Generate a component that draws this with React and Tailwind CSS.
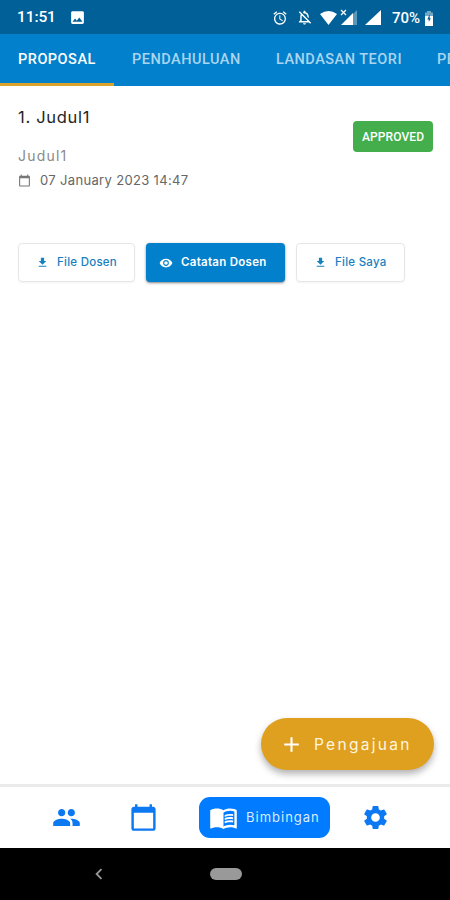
import React from 'react'
import {
  MdAdd,
  MdAlarm,
  MdCalendarToday,
  MdChevronLeft,
  MdFileDownload,
  MdImage,
  MdMenuBook,
  MdOutlineNotificationsOff,
  MdPeople,
  MdSettings,
  MdVisibility,
} from 'react-icons/md'

function StatusBar() {
  return (
    <div className="flex h-[34px] items-center bg-[#006097] pl-[17px] pr-[17px] pt-[2px] font-['Roboto',sans-serif] text-[15.5px] font-medium text-white">
      <span className="w-[52px] tracking-[-0.1px]">11:51</span>
      <MdImage className="-mt-px h-[17px] w-[17px]" />
      <MdAlarm className="-mt-px ml-auto h-[16px] w-[16px]" />
      <MdOutlineNotificationsOff className="-mt-px ml-[8px] h-[17px] w-[17px]" />
      {/* Wifi + signal */}
      <svg className="-mt-px ml-[7px]" width="17" height="14" viewBox="0 0 17 14" fill="currentColor">
        <path d="M0 3Q8.500-3 17 3L8.500 14Z" />
      </svg>
      <svg className="-mt-[2px] ml-[3px]" width="17" height="17" viewBox="0 0 17 17" fill="currentColor">
        <path d="M17 1v15H13V5Z" opacity=".35" />
        <path d="M13 4v12H1Z" />
        <path d="M1 1l5 5M6 1L1 6" stroke="currentColor" strokeWidth="1.200" />
      </svg>
      <svg className="-mt-[2px] ml-[8px]" width="17" height="15" viewBox="0 0 17 15" fill="currentColor">
        <path d="M16 0v15H0Z" />
      </svg>
      <span className="ml-[10px] w-[30px] text-[15px]">70%</span>
      <svg className="ml-[3px]" width="8" height="15" viewBox="0 0 8 15" fill="currentColor">
        <path d="M2 0h4v1.500H8V5H0V1.500H2Z" opacity=".45" />
        <path d="M0 5h8v10H0Z" />
        <path d="M4.700 3L2.300 8.500H3.800V11L5.800 7.300H4.700Z" fill="#006097" />
      </svg>
    </div>
  )
}

function Tabs() {
  return (
    <div className="flex h-[52px] overflow-hidden whitespace-nowrap bg-[#0280cc] font-['Roboto',sans-serif] text-[14.5px] font-medium text-[#a9d5f0]">
      <div className="flex w-[114px] shrink-0 items-center border-b-[3px] border-[#d9a32c] pl-[18px] pt-[3px] tracking-[0.5px] text-white">PROPOSAL</div>
      <div className="flex w-[144px] shrink-0 items-center pl-[18px] tracking-[0.5px]">PENDAHULUAN</div>
      <div className="flex w-[161px] shrink-0 items-center pl-[18px] tracking-[0.5px]">LANDASAN TEORI</div>
      <div className="flex shrink-0 items-center pl-[18px] tracking-[0.5px]">PE</div>
    </div>
  )
}

function Proposal() {
  return (
    <div className="flex h-[157px] items-start justify-between pl-[18px] pr-[17px]">
      <div>
        <h1 className="mt-[19px] text-[16.5px] leading-[24px] tracking-[0.7px] text-[#252525]">1. Judul1</h1>
        <p className="mt-[16px] text-[14px] leading-[22px] tracking-[1.2px] text-[#8a8a8a]">Judul1</p>
        <div className="mt-[3px] flex items-center text-[13px] leading-[20px] text-[#666]">
          <MdCalendarToday className="mr-[9px] h-[13px] w-[13px] text-[#777]" />
          <span className="tracking-[0.34px]">07 January 2023 14:47</span>
        </div>
      </div>
      <span className="mt-[35px] flex h-[31px] w-[80px] items-center justify-center rounded-[4px] bg-[#43ae4b] font-['Roboto',sans-serif] text-[12px] font-medium tracking-[0.1px] text-white">
        APPROVED
      </span>
    </div>
  )
}

function Actions() {
  return (
    <div className="flex gap-[11px] pl-[18px] text-[11.5px] font-medium text-[#1681c0]">
      <button className="flex h-[39px] w-[117px] items-center rounded-[4px] border border-[#e6e6e6] pl-[17px] shadow-xs">
        <MdFileDownload className="mr-[8px] h-[13px] w-[13px]" />
        <span className="tracking-[0.25px]">File Dosen</span>
      </button>
      <button className="flex h-[39px] w-[139px] items-center rounded-[4px] bg-[#0280cc] pl-[13px] text-white shadow-sm shadow-black/40">
        <MdVisibility className="mr-[8px] h-[14px] w-[14px]" />
        <span className="font-semibold tracking-[0.28px]">Catatan Dosen</span>
      </button>
      <button className="flex h-[39px] w-[109px] items-center rounded-[4px] border border-[#e6e6e6] pl-[17px] shadow-xs">
        <MdFileDownload className="mr-[8px] h-[13px] w-[13px]" />
        <span className="tracking-[0.25px]">File Saya</span>
      </button>
    </div>
  )
}

function BottomNav() {
  return (
    <div className="flex h-[64px] items-center border-t-[3px] border-[#ebebeb] bg-white pl-[52px] text-[#0c78f2]">
      <MdPeople className="h-[29px] w-[29px]" />
      <MdCalendarToday className="ml-[48px] h-[29px] w-[29px]" />
      <div className="ml-[41px] flex h-[41px] w-[131px] items-center rounded-[11px] bg-[#017bff] pl-[10px] text-white">
        <MdMenuBook className="h-[29px] w-[29px]" />
        <span className="ml-[8px] text-[13px] tracking-[1px] text-[#d9ebff]">Bimbingan</span>
      </div>
      <MdSettings className="ml-[31px] h-[29px] w-[29px]" />
    </div>
  )
}

function App() {
  return (
    <div className="flex h-[900px] w-[450px] flex-col overflow-hidden bg-white font-['Inter',sans-serif]">
      <StatusBar />
      <Tabs />
      <div className="flex flex-1 flex-col">
        <Proposal />
        <Actions />
        {/* New submission */}
        <button className="mb-[14px] mr-[16px] mt-auto flex h-[52px] w-[173px] items-center self-end rounded-full bg-[#df9f1f] pl-[18px] text-white shadow-[0_4px_7px_rgba(0,0,0,0.3)]">
          <MdAdd className="h-[25px] w-[25px]" />
          <span className="ml-[10px] pt-px text-[15.5px] tracking-[2.3px] text-[#fff6df]">Pengajuan</span>
        </button>
      </div>
      <BottomNav />
      {/* Android navigation */}
      <div className="flex h-[52px] items-center bg-black pl-[88px] text-[#999]">
        <MdChevronLeft className="h-[22px] w-[22px]" />
        <div className="ml-[100px] h-[12px] w-[32px] rounded-full bg-[#999]" />
      </div>
    </div>
  )
}

export default App
